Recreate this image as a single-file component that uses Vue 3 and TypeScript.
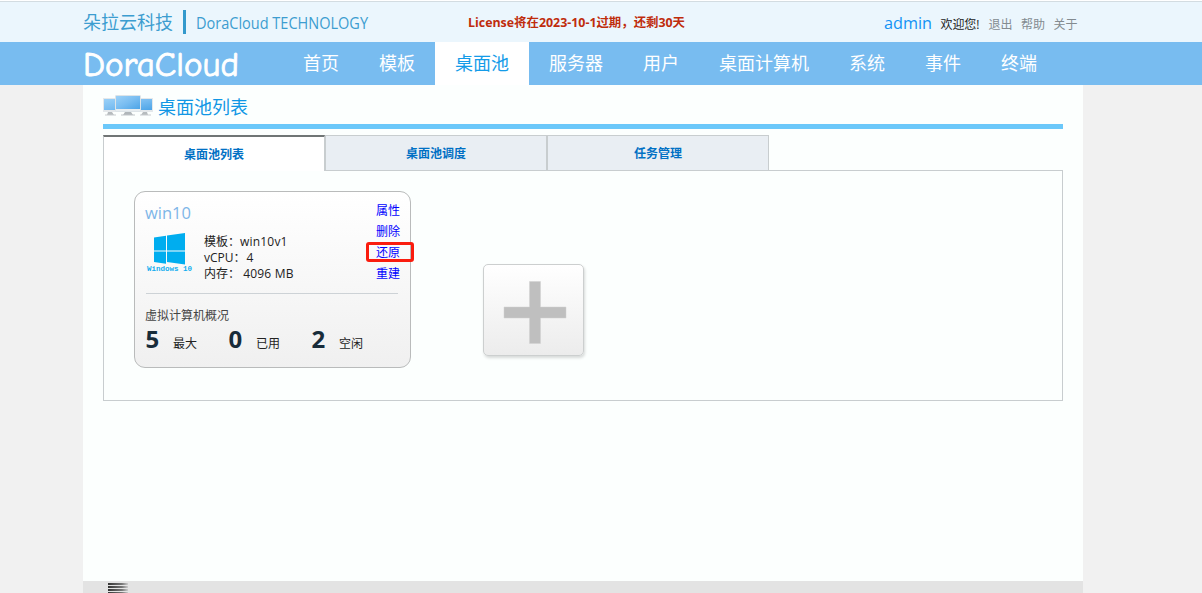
<script setup lang="ts">
interface Item { label: string; active?: boolean }
const nav: Item[] = [
  { label: '首页' }, { label: '模板' }, { label: '桌面池', active: true }, { label: '服务器' },
  { label: '用户' }, { label: '桌面计算机' }, { label: '系统' }, { label: '事件' }, { label: '终端' },
]
const tabs: Item[] = [{ label: '桌面池列表', active: true }, { label: '桌面池调度' }, { label: '任务管理' }]
const actions: Item[] = [{ label: '属性' }, { label: '删除' }, { label: '还原', active: true }, { label: '重建' }]
const stats = [{ n: 5, label: '最大' }, { n: 0, label: '已用' }, { n: 2, label: '空闲' }]
</script>

<template>
  <div class="page">
    <header class="top">
      <div class="inner top-inner">
        <span class="brand-cn">朵拉云科技</span>
        <span class="bar"></span>
        <svg class="brand-en" width="194" height="26"><text x="0" y="18" textLength="172" lengthAdjust="spacingAndGlyphs">DoraCloud TECHNOLOGY</text></svg>
        <svg class="license" width="224" height="20"><text x="0" y="14" textLength="217" lengthAdjust="spacingAndGlyphs">License将在2023-10-1过期，还剩30天</text></svg>
        <div class="user">
          <svg class="admin" width="49" height="24"><text x="0" y="17" textLength="48" lengthAdjust="spacingAndGlyphs">admin</text></svg>
          <span class="welcome">欢迎您!</span>
          <a>退出</a><a>帮助</a><a>关于</a>
        </div>
      </div>
    </header>
    <nav class="nav">
      <div class="inner nav-inner">
        <svg class="logo" width="200" height="43"><text x="0" y="34" textLength="156" lengthAdjust="spacingAndGlyphs">DoraCloud</text></svg>
        <a v-for="n in nav" :key="n.label" :class="{ active: n.active }">{{ n.label }}</a>
      </div>
    </nav>
    <main class="inner main">
      <div class="title">
        <svg width="50" height="26" viewBox="0 0 50 26">
          <defs>
            <linearGradient id="screen" x1="0" y1="0" x2="1" y2="1">
              <stop offset="0" stop-color="#9bd1f8" /><stop offset=".5" stop-color="#79bdf1" /><stop offset="1" stop-color="#4ca4e7" />
            </linearGradient>
          </defs>
          <g fill="#e4e8eb">
            <rect x="0" y="5" width="18" height="14" />
            <rect x="32" y="5" width="18" height="14" />
          </g>
          <path d="M1 6h12v11H1zM37 6h12v11H37z" fill="url(#screen)" />
          <path d="M5 19h4l2 3H4zM40 19h4l1 3h-7z" fill="#b6bbbe" />
          <path d="M2 22h11M37 22h11" stroke="#c8cccf" />
          <rect x="12.500" y="2.500" width="25" height="16" rx=".5" fill="#e8edf0" stroke="#dde4e8" />
          <rect x="13" y="3" width="24" height="13" fill="url(#screen)" />
          <path d="M22 19h6l2 3H20z" fill="#b0b6ba" />
          <path d="M18 22h14" stroke="#c0c5c8" />
        </svg>
        <h1>桌面池列表</h1>
      </div>
      <div class="tabs">
        <a v-for="t in tabs" :key="t.label" :class="{ active: t.active }">{{ t.label }}</a>
      </div>
      <section class="panel">
        <article class="card">
          <svg class="name" width="60" height="24"><text x="0" y="17" textLength="46" lengthAdjust="spacingAndGlyphs">win10</text></svg>
          <div class="info">
            <svg class="windows" width="47" height="44" viewBox="0 0 47 44">
              <path d="M8 5.500l12-1.800v14.800H8zM21 3.500L39 1v17.500H21zM8 19.500h12v12.300L8 30zM21 19.500h18V32.500l-18-2.400z" fill="#00adef" />
              <text x="1" y="38.500" textLength="45" lengthAdjust="spacingAndGlyphs">Windows 10</text>
            </svg>
            <div class="specs">
              <div>模板：<span>win10v1</span></div>
              <div>vCPU：<span class="count">4</span></div>
              <div>内存： <span>4096 MB</span></div>
            </div>
          </div>
          <div class="actions">
            <a v-for="a in actions" :key="a.label" :class="{ marked: a.active }">{{ a.label }}</a>
          </div>
          <div class="rule"></div>
          <div class="overview">虚拟计算机概况</div>
          <div class="stats">
            <div v-for="s in stats" :key="s.label" class="stat"><b>{{ s.n }}</b><span>{{ s.label }}</span></div>
          </div>
        </article>
        <button class="add" aria-label="添加">
          <svg width="62" height="63" viewBox="0 0 62 63"><path d="M25.500.5h11V26H62v11H36.500v25.500h-11V37H0V26h25.500z" fill="#bfbfbf" stroke="#d0d0d0" stroke-width=".5" /></svg>
        </button>
      </section>
    </main>
    <footer class="inner footer">
      <div class="lines"><i></i><i></i><i></i><i></i></div>
    </footer>
  </div>
</template>

<style>
html, body { margin: 0; overflow: hidden; }
</style>
<style scoped>
* { box-sizing: border-box; }
.page {
  width: 1202px; height: 593px; overflow: hidden; background: #f1f1f1;
  font: 12px/16px "Open Sans", "Noto Sans CJK SC", sans-serif; color: #222;
  display: flex; flex-direction: column;
}
.inner { width: 1000px; margin-left: 83px; flex-shrink: 0; }
svg { display: block; flex-shrink: 0; overflow: visible; }
a { white-space: nowrap; }
.top { height: 42px; background: #ebf6fd; border-top: 1px solid #fff; flex-shrink: 0; }
.top-inner { display: flex; height: 41px; }
.top::before { content: ""; display: block; height: 1px; margin-bottom: -1px; background: #d3dce1; }
.brand-cn { font-size: 18px; line-height: 43px; color: #3c9dd0; width: 100px; }
.bar { width: 3px; height: 24px; margin-top: 9px; background: #3399cc; }
.brand-en { margin: 10px 0 0 10px; font-size: 16px; fill: #3c9dd0; }
.license { margin: 12px 0 0 78px; font-size: 12px; font-weight: 700; fill: #bf2c0c; }
.user { margin-left: auto; padding-right: 5px; display: flex; line-height: 47px; color: #838b90; gap: 8px; }
.admin { margin-top: 11px; font-size: 17px; fill: #1292f5; }
.welcome { color: #222; width: 40px; white-space: nowrap; letter-spacing: -0.1px; }
.user a { width: 24.500px; }
.nav { height: 43px; background: #78bcf0; flex-shrink: 0; }
.nav-inner { display: flex; }
.logo { font: 400 35px "Comic Sans MS", "Comic Neue", Lato, sans-serif; fill: #fff; stroke: #fff; stroke-width: .9px; }
.nav a { height: 43px; padding: 0 20px; font-size: 18px; line-height: 43px; color: #fff; }
.nav a.active { background: #fff; color: #149be8; }
.main { height: 496px; padding: 8px 20px 0; background: #fcfffe; }
.title { height: 36px; display: flex; border-bottom: 5px solid #6bc8fa; }
h1 { margin: 0 0 0 5px; font-size: 18px; font-weight: 400; line-height: 28px; color: #1197e5; }
.tabs { display: flex; margin-top: 6px; height: 36px; position: relative; z-index: 1; }
.tabs a {
  width: 222px; height: 36px; text-align: center; line-height: 35px; font-weight: 700; color: #0070c4;
  background: #e9eef3; border: 1px solid #c8cdcf;
}
.tabs a.active { background: #fff; border-top: 2px solid #707575; border-bottom: 0; }
.panel { height: 231px; margin-top: -1px; border: 1px solid #c8cdcf; padding: 20px 30px; display: flex; }
.card {
  position: relative; width: 277px; height: 177px; padding: 10px 10px 0; border: 1px solid #b9bbbb; border-radius: 11px;
  background: linear-gradient(#fff, #f0f0f0);
}
.name { font-size: 17px; fill: #7db6e8; }
.info { display: flex; height: 50px; margin-top: 5px; }
.windows text { font: 700 8px "Liberation Mono", monospace; fill: #13adef; }
.windows { margin: 1px 0 0 1px; }
.specs { margin: 3px 0 0 11px; line-height: 16px; }
.specs span { letter-spacing: .2px; }
.specs .count { margin-left: 1px; }
.actions { position: absolute; right: -4px; top: 8px; width: 48px; }
.actions a { display: block; height: 21px; line-height: 21px; text-align: left; padding-left: 10px; color: #00f; }
.actions a.marked { border: 3px solid #fa1c0e; border-radius: 3px; line-height: 15px; padding-left: 7px; height: 20px; margin-bottom: 1px; }
.rule { width: 252px; height: 1px; margin: 12px 0 0 1px; background: #cdd2d6; }
.overview { margin-top: 14px; color: #444; }
.stats { display: flex; height: 30px; }
.stat { width: 83px; display: flex; line-height: 30px; }
.stat b { width: 28px; padding-left: .5px; font-size: 24px; color: #182c3a; }
.stat span { padding-top: 5px; }
.add {
  width: 101px; height: 92px; margin: 73px 0 0 72px; padding: 4px 0 0 2px; border: 1px solid #cccfcf; border-radius: 5px;
  background: linear-gradient(#fff, #ececec); box-shadow: 1px 2px 3px rgba(0, 0, 0, .15);
  display: flex; align-items: center; justify-content: center;
}
.footer { height: 12px; padding: 2px 0 0 25px; background: #e3e3e3; overflow: hidden; }
.lines { display: grid; gap: 1px; width: 20px; }
.lines i { height: 2px; background: linear-gradient(90deg, #333, #777 70%, #ccc); }
</style>
